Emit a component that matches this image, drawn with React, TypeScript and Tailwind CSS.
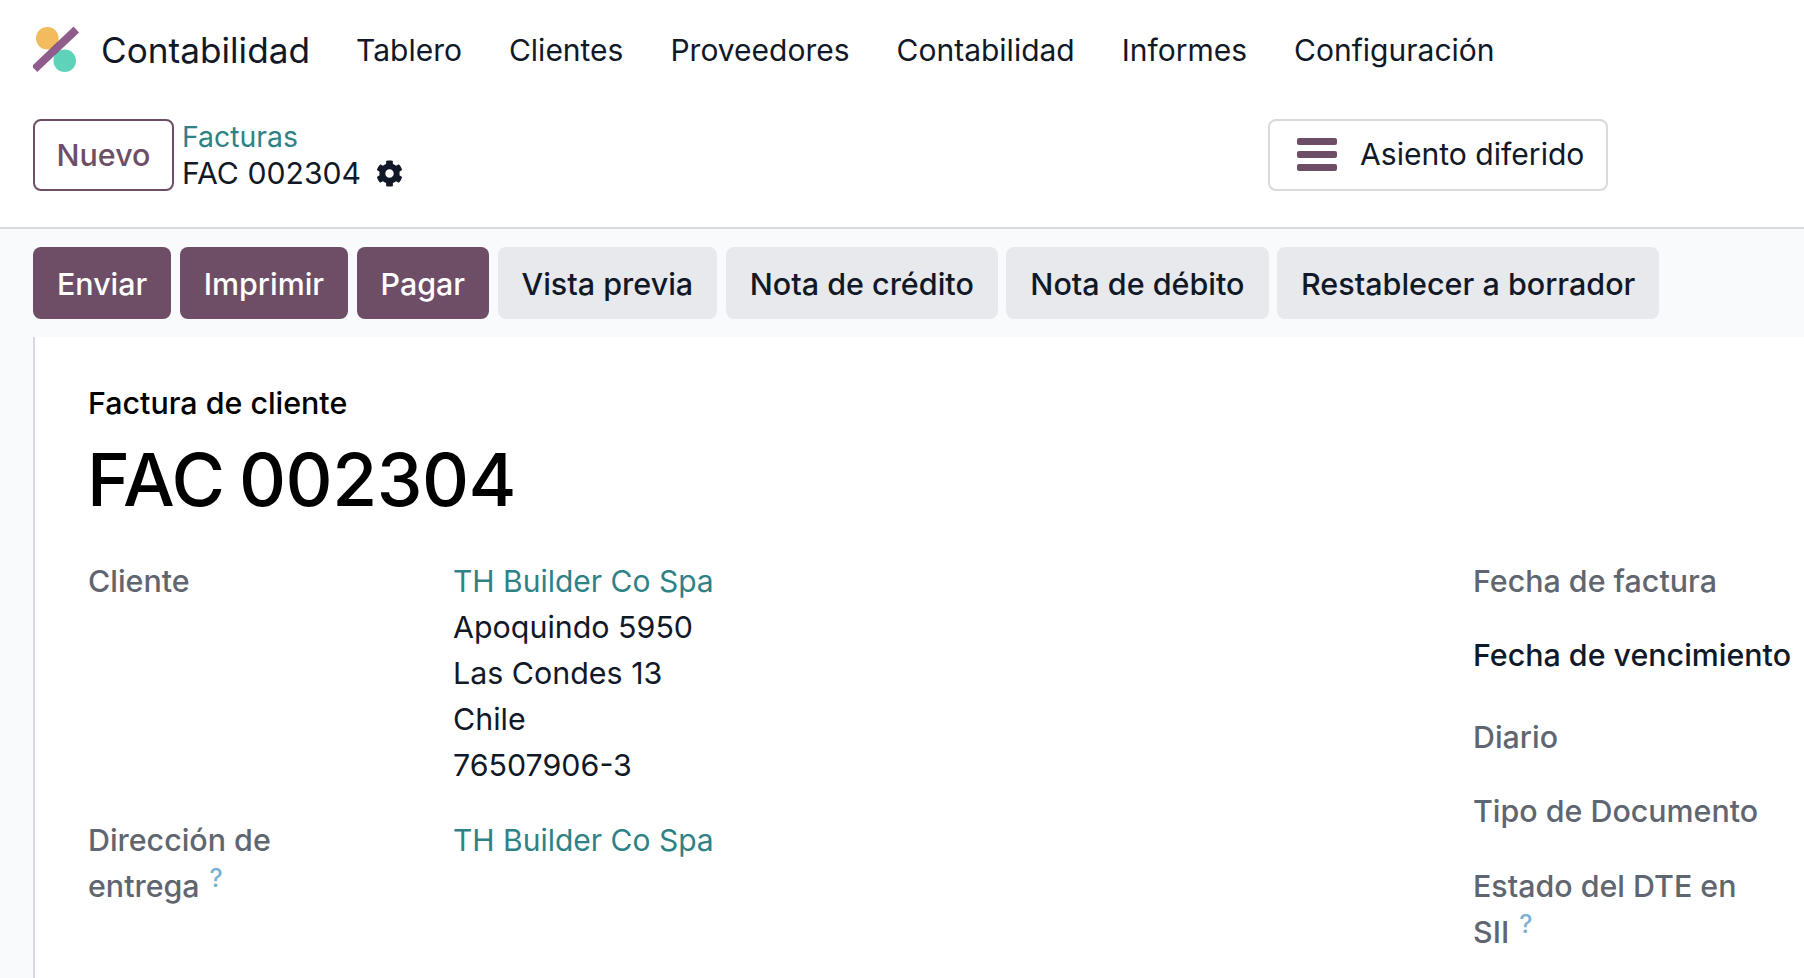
import { FaCog } from 'react-icons/fa'

const navLinks = ['Tablero', 'Clientes', 'Proveedores', 'Contabilidad', 'Informes', 'Configuración']
const primaryActions = ['Enviar', 'Imprimir', 'Pagar']
const secondaryActions = ['Vista previa', 'Nota de crédito', 'Nota de débito', 'Restablecer a borrador']

const Logo = () => (
  <svg width="48" height="46" viewBox="0 0 48 46" className="shrink-0">
    <circle cx="14.3" cy="11.3" r="11.3" fill="#f1bb5e" />
    <circle cx="31.7" cy="33.7" r="11.3" fill="#5fd3ba" />
    <line x1="43.3" y1="2.5" x2="1.5" y2="42" stroke="#7d3f78" strokeOpacity="0.85" strokeWidth="8" />
  </svg>
)

const BarsIcon = () => (
  <svg width="40" height="33" viewBox="0 0 40 33" className="shrink-0" fill="#6e4e67">
    <rect x="0" y="0" width="40" height="7" rx="2" />
    <rect x="0" y="13" width="40" height="7" rx="2" />
    <rect x="0" y="26" width="40" height="7" rx="2" />
  </svg>
)

const Help = () => (
  <span className="ml-[10px] text-[25px] leading-none text-[#7ab0d0] align-[10px]">?</span>
)

const Label = ({ children, className = '' }: { children: React.ReactNode; className?: string }) => (
  <div className={`text-[#5f6670] font-[450] ${className}`}>{children}</div>
)

export default function App() {
  return (
    <div
      className="h-screen w-full overflow-hidden bg-[#f9fafb] text-[#111827] text-[30.4px] leading-[46px]"
      style={{ fontFamily: 'Inter, "Noto Sans", sans-serif' }}
    >
      {/* Barra superior */}
      <div className="bg-white">
        <nav className="flex items-center h-[100px] pl-[33px]">
          <Logo />
          <span className="ml-[20px] mr-[46px] text-[35.2px]">Contabilidad</span>
          <div className="flex gap-[47px] text-[30px]">
            {navLinks.map(link => (
              <span key={link}>{link}</span>
            ))}
          </div>
        </nav>

        {/* Panel de control */}
        <div className="flex items-center h-[129px] pb-[18px] pl-[33px] border-b-2 border-[#d8dadd]">
          <div className="flex items-center w-[1235px] gap-[8px]">
            <button className="flex items-center justify-center w-[141px] h-[72px] rounded-lg border-2 border-[#6e4e67] text-[#6e4e67] font-medium">
              Nuevo
            </button>
            <div className="flex flex-col leading-[37px]">
              <span className="text-[28.4px] text-[#2e8285]">Facturas</span>
              <div className="flex items-center gap-[15px] text-[30.2px]">
                <span>FAC 002304</span>
                <FaCog className="text-[27px]" />
              </div>
            </div>
          </div>
          <button className="flex items-center h-[72px] w-[340px] pl-[27px] pb-[1px] gap-[23px] rounded-lg border-2 border-[#d8dadd] text-[30.1px]">
            <BarsIcon />
            <span>Asiento diferido</span>
          </button>
        </div>
      </div>

      {/* Acciones */}
      <div className="flex gap-[8.5px] pt-[18px] pb-[18px] pl-[33px] font-medium">
        {primaryActions.map(action => (
          <button key={action} className="h-[72px] px-[24px] pt-[1px] rounded-lg bg-[#6e4e67] text-white">
            {action}
          </button>
        ))}
        {secondaryActions.map(action => (
          <button key={action} className="h-[72px] px-[24px] pt-[1px] rounded-lg bg-[#e7e9ed] text-[#111827] text-[30.5px]">
            {action}
          </button>
        ))}
      </div>

      {/* Hoja */}
      <div className="ml-[33px] h-[700px] w-[1900px] bg-white border-l-2 border-[#d8dadd] pl-[53px] pt-[46px] text-black">
        <div className="font-medium leading-[40px]">Factura de cliente</div>
        <h1 className="mt-[12px] -ml-[1px] text-[73px] leading-[90px] font-medium tracking-[-0.5px] [word-spacing:-4.5px]">
          FAC 002304
        </h1>

        <div className="flex mt-[33px] text-[#111827]">
          <div className="grid grid-cols-[365px_1fr] w-[1385px] content-start">
            <Label>Cliente</Label>
            <div>
              <div className="text-[#2e8285] text-[30px]">TH Builder Co Spa</div>
              <div>Apoquindo 5950</div>
              <div>Las Condes 13</div>
              <div>Chile</div>
              <div>76507906-3</div>
            </div>
            <Label className="mt-[29px] w-[230px]">
              Dirección de entrega
              <Help />
            </Label>
            <div className="mt-[29px] text-[#2e8285] text-[30px]">TH Builder Co Spa</div>
          </div>

          <div className="flex flex-col w-[340px]">
            <Label>Fecha de factura</Label>
            <div className="mt-[28px] font-medium whitespace-nowrap">Fecha de vencimiento</div>
            <Label className="mt-[36px]">Diario</Label>
            <Label className="mt-[28px]">Tipo de Documento</Label>
            <Label className="mt-[29px] w-[290px]">
              Estado del DTE en SII
              <Help />
            </Label>
          </div>
        </div>
      </div>
    </div>
  )
}
